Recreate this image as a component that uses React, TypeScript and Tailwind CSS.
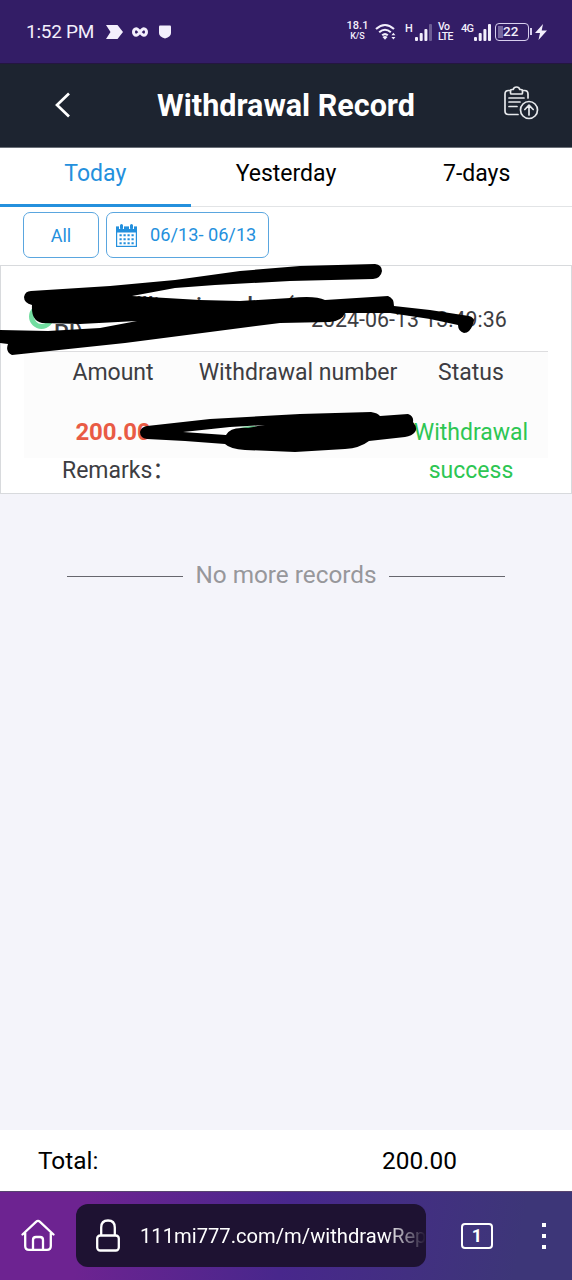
import type { ReactNode } from 'react';

const TABS = ['Today', 'Yesterday', '7-days'];

function SignalBars({ weak = false }: { weak?: boolean }) {
  return (
    <svg className="h-[18px] w-[17px]" viewBox="0 0 17 18" fill="#f3effc">
      <rect x="0" y="14" width="3" height="4" rx="1" />
      <rect x="4.7" y="10" width="3" height="8" rx="1" />
      <rect x="9.4" y="6" width="3" height="12" rx="1" />
      <rect x="14" y="1" width="3" height="17" rx="1" opacity={weak ? 0.3 : 1} />
    </svg>
  );
}

function StatusBar() {
  return (
    <div className="flex h-16 items-center border-b border-[#241640] bg-[#331d66] pl-[26px] text-[#f3effc]">
      <span className="mt-[2px] w-[80px] text-[19px] tracking-[-0.25px] whitespace-nowrap">1:52 PM</span>
      <svg className="h-[14px] w-[17px]" viewBox="0 0 17 14" fill="currentColor">
        <path d="M0 0H11.5L17 7L11.5 14H0L4.5 7Z" />
      </svg>
      <svg className="ml-[9px] h-[10px] w-[16px]" viewBox="0 0 15 9" fill="none" stroke="currentColor" strokeWidth="2.8">
        <path d="M7.5 4.5C5.5 1.7 4.7 1.4 3.9 1.4a2.5 3.1 0 0 0 0 6.2C4.7 7.6 5.5 7.3 7.5 4.5S10.3 1.4 11.1 1.4a2.5 3.1 0 0 1 0 6.2C10.3 7.6 9.5 7.3 7.5 4.5Z" />
      </svg>
      <svg className="ml-[11px] h-[14px] w-[12px]" viewBox="0 0 12 14" fill="currentColor">
        <path d="M1 0.5H11Q12 0.5 12 1.5V8Q12 11.5 6 13.5Q0 11.5 0 8V1.5Q0 0.5 1 0.5Z" />
      </svg>

      <div className="-mt-px ml-[176px] flex w-[21px] flex-col items-center leading-[10px] font-medium">
        <span className="text-[11px]">18.1</span>
        <span className="text-[9px]">K/S</span>
      </div>
      <svg className="ml-[7px] h-[18px] w-[21px]" viewBox="0 0 21 18" fill="none" stroke="currentColor" strokeWidth="2.1">
        <path d="M1 6Q10 -2 19 6M4.2 9.3Q10 4.2 15.8 9.3M7.2 12.3Q10 9.8 12.8 12.3" />
        <path d="M7.5 14L10 16.8L12.5 14Q10 12.2 7.5 14Z" fill="currentColor" stroke="none" />
        <path d="M16.4 12.3L18.4 9.8L20.4 12.3ZM16.4 14L18.4 16.5L20.4 14Z" fill="currentColor" stroke="none" />
      </svg>
      <span className="-mt-[7px] ml-[9px] w-[10px] text-[11px] leading-none font-medium">H</span>
      <SignalBars weak />
      <div className="ml-[6px] w-[17px] text-[10.5px] leading-[10px] font-medium tracking-[-0.6px]">
        <div>Vo</div>
        <div>LTE</div>
      </div>
      <span className="-mt-[7px] ml-[6px] w-[13px] text-[11px] leading-none font-medium tracking-[-0.8px]">4G</span>
      <SignalBars />
      <div className="ml-[4px] flex h-[18px] w-[34px] items-center rounded-[4px] border-[1.5px] border-[#d8cfee] pl-[2px]">
        <div className="h-[12px] w-[5px] bg-[#75659d]" />
        <span className="text-[13.5px] leading-none font-medium">22</span>
      </div>
      <div className="ml-px h-[7px] w-[2px] bg-[#d8cfee]" />
      <svg className="ml-[3px] h-[16px] w-[12px]" viewBox="0 0 12 16" fill="currentColor">
        <path d="M8 0L0 9H5L3.5 16L12 6.5H6.7Z" />
      </svg>
    </div>
  );
}

function PageHeader() {
  return (
    <div className="grid h-[84px] grid-cols-[126px_320px_126px] items-center border-b border-[#6b7078] bg-[#1d2430] text-white">
      <svg className="-mt-[2px] ml-[54px] h-[26px] w-[18px]" viewBox="0 0 18 26" fill="none" stroke="currentColor" strokeWidth="2.7">
        <path d="M15 1.5L3 13L15 24.5" />
      </svg>
      <h1 className="text-center text-[30.5px] font-bold whitespace-nowrap">Withdrawal Record</h1>
      <svg className="-mt-[6px] ml-[58px] h-[34px] w-[35px]" viewBox="0 0 35 34" fill="none" stroke="#e6e8eb" strokeWidth="1.7" strokeLinecap="round" strokeLinejoin="round">
        <path d="M6.5 4.5H4.5Q1 4.5 1 8V25Q1 28.5 4.5 28.5H14M18.5 4.5H20.5Q24 4.5 24 8V12" />
        <path d="M6.5 7V4.5Q6.5 3.5 8 3.5H9.2Q9.8 1 12.5 1T15.8 3.5H17Q18.5 3.5 18.5 4.5V7Q18.5 8 17.5 8H7.5Q6.5 8 6.5 7Z" />
        <path d="M5 12H20M5 16H16M5 20.5H13" />
        <circle cx="25" cy="24" r="8.5" />
        <path d="M25 29V19.5M20.8 23.5L25 19.2L29.2 23.5" />
      </svg>
    </div>
  );
}

function Filters() {
  return (
    <div className="flex h-[58px] gap-[7px] pt-[5px] pl-[23px] text-[18px] text-[#2490dd]">
      <button className="h-[46px] w-[76px] rounded-[7px] border border-[#5aa6df]">All</button>
      <button className="flex h-[46px] w-[163px] items-center rounded-[7px] border border-[#5aa6df] pl-[9px]">
        <svg className="h-[23px] w-[21px]" viewBox="0 0 21 23" fill="none">
          <rect x="0.6" y="3" width="19.8" height="19.4" stroke="#2490dd" strokeWidth="1.2" />
          <rect x="0.6" y="3" width="19.8" height="5.5" fill="#2490dd" />
          <path d="M5.5 0.5V5M15.5 0.5V5" stroke="#fff" strokeWidth="5" />
          <path d="M5.5 1.5V4M15.5 1.5V4" stroke="#2490dd" strokeWidth="3" strokeLinecap="round" />
          <path d="M3.5 11.2H18M3.5 15.2H18M3.5 19.2H18" stroke="#2490dd" strokeWidth="2" strokeDasharray="2.2 1.8" />
        </svg>
        <span className="ml-[13px] text-[18.2px] whitespace-nowrap">06/13- 06/13</span>
      </button>
    </div>
  );
}

function Column({ title, children }: { title: string; children?: ReactNode }) {
  return (
    <div className="flex flex-col items-center whitespace-nowrap">
      <div className="h-[60px] leading-[41px]">{title}</div>
      {children}
    </div>
  );
}

// Marker strokes that hide the account details
function MarkerStrokes() {
  return (
    <svg className="pointer-events-none absolute -top-[6px] -left-px h-[234px] w-[572px]" viewBox="0 260 572 234" fill="#000">
      <path d="M31 291L110 286L175 280L240 271L300 266L375 264Q382 265 382 271Q381 278 373 279L290 281L215 285L175 288L132 296L200 300L240 301L290 298Q315 295 325 300L388 296Q394 298 394 306L430 310L469 316Q476 318 473 324Q470 333 464 333Q458 331 458 325L430 319L390 313L345 313Q342 321 330 322L280 323L210 332L125 343L12 355Q5 352 8 344L0 343V330L48 331L100 328L137 321L80 324L42 323Q31 321 32 305Q24 303 24 297Q25 291 31 291Z" />
      <path d="M147 426L210 419L300 414L371 412Q378 413 380 416L408 414Q414 416 413 422Q418 428 415 432Q412 436 405 437L369 441Q360 448 345 449L295 452L245 450Q230 449 225 444L185 441L147 439Q140 438 140 432Q141 427 147 426Z" />
      <path d="M183 432L230 427L265 425L241 428Q230 428 226 435Z" fill="#fff" />
      <path d="M239 427L258 426L248 428Z" fill="#50b978" />
    </svg>
  );
}

function RecordCard() {
  return (
    <div className="relative h-[229px] border border-[#d8dadd] bg-white text-[#3d3d42]">
      <div className="ml-[23px] flex h-[86px] w-[524px] border-b border-[#dddddf]">
        <div className="mt-[38px] ml-[5px] h-[25px] w-[25px] rounded-full border-[5px] border-[#72dda0]" />
        <div className="w-[257px] pt-[26px] text-[23px] leading-[30px] font-medium">
          <div className="flex pl-[82px]">
            <span className="w-[60px]">llli</span>
            <span className="w-[44px]">i</span>
            <span className="w-[46px]">d</span>
            <span>(</span>
          </div>
          <div className="leading-[24px]">PI)</div>
        </div>
        <span className="mt-[39px] text-[21.4px] leading-[30px] whitespace-nowrap">2024-06-13 13:49:36</span>
      </div>
      <div className="mx-[23px] grid h-[106px] w-[524px] grid-cols-[178px_192px_154px] bg-[#fcfcfc] text-[23px]">
        <Column title="Amount">
          <div className="text-[24px] leading-[40px] font-bold tracking-[-0.1px] text-[#e95b45]">200.00</div>
          <div className="self-start pl-[38px] leading-[38px]">Remarks：</div>
        </Column>
        <Column title="Withdrawal number" />
        <Column title="Status">
          <div className="pt-[2px] text-center leading-[38px] text-[#2dc653]">
            Withdrawal
            <br />
            success
          </div>
        </Column>
      </div>
      <MarkerStrokes />
    </div>
  );
}

function BrowserBar() {
  return (
    <div className="flex h-[89px] items-center border-t border-[#57446f] bg-linear-[100deg] from-[#6d2391] from-15% via-[#48278c] via-50% to-[#3d3678] to-90% pl-[21px] text-white">
      <svg className="-mt-[3px] h-[32px] w-[34px]" viewBox="0 0 34 32" fill="none" stroke="currentColor" strokeWidth="2.3" strokeLinecap="round" strokeLinejoin="round">
        <path d="M1.5 15.5L15 2.8Q17 1 19 2.8L32.5 15.5M4.2 14V27Q4.2 30.8 8 30.8H26Q29.8 30.8 29.8 27V14" />
        <path d="M12 30.5V21Q12 18 15 18H19Q22 18 22 21V30.5" />
      </svg>
      <div className="-mt-px ml-[21px] flex h-[63px] w-[350px] items-center overflow-hidden rounded-[12px] bg-[#1e1232] pl-[20px]">
        <svg className="h-[33px] w-[24px] shrink-0" viewBox="0 0 24 33" fill="none" stroke="currentColor" strokeWidth="2.3">
          <rect x="1.2" y="16.5" width="21.6" height="15" rx="3" />
          <path d="M5.2 16.5V8.5Q5.2 1.5 12 1.5T18.8 8.5V16.5" />
        </svg>
        <div className="mt-[2px] ml-[20px] w-[286px] shrink-0 overflow-hidden mask-r-from-86% mask-r-to-100% text-[20.2px] whitespace-nowrap">
          111mi777.com/m/withdrawRepo
        </div>
      </div>
      <div className="-mt-px ml-[35px] flex h-[26px] w-[32px] items-center justify-center rounded-[4px] border-2 border-white text-[18px] leading-none font-bold">1</div>
      <div className="ml-[49px] flex flex-col gap-[7px]">
        <div className="size-1 bg-white" />
        <div className="size-1 bg-white" />
        <div className="size-1 bg-white" />
      </div>
    </div>
  );
}

export default function App() {
  return (
    <div className="flex h-[1280px] w-[572px] flex-col overflow-hidden bg-[#f4f4fa] font-[Roboto,'Noto_Sans_CJK_SC',sans-serif]">
      <StatusBar />
      <PageHeader />

      <div className="grid h-[59px] grid-cols-3 border-b border-[#e2e4e6] bg-white text-[23px]">
        {TABS.map((tab, i) => (
          <button
            key={tab}
            className={i === 0 ? 'h-[59px] border-b-[3px] border-[#2490dd] pb-[4px] text-[#2490dd]' : 'h-[59px] pb-[7px] text-black'}
          >
            {tab}
          </button>
        ))}
      </div>
      <div className="bg-white">
        <Filters />
      </div>
      <RecordCard />

      <div className="mt-[61px] flex h-[40px] items-center justify-center gap-[12px] text-[24.3px] text-[#97979b]">
        <div className="mt-[3px] h-px w-[116px] bg-[#66666d]" />
        <span className="whitespace-nowrap">No more records</span>
        <div className="mt-[3px] h-px w-[116px] bg-[#66666d]" />
      </div>

      <div className="mt-auto flex h-[61px] shrink-0 items-center bg-white pt-px text-[24.4px] text-black">
        <span className="w-[344px] pl-[38px]">Total:</span>
        <span className="pl-[38px]">200.00</span>
      </div>
      <BrowserBar />
    </div>
  );
}
